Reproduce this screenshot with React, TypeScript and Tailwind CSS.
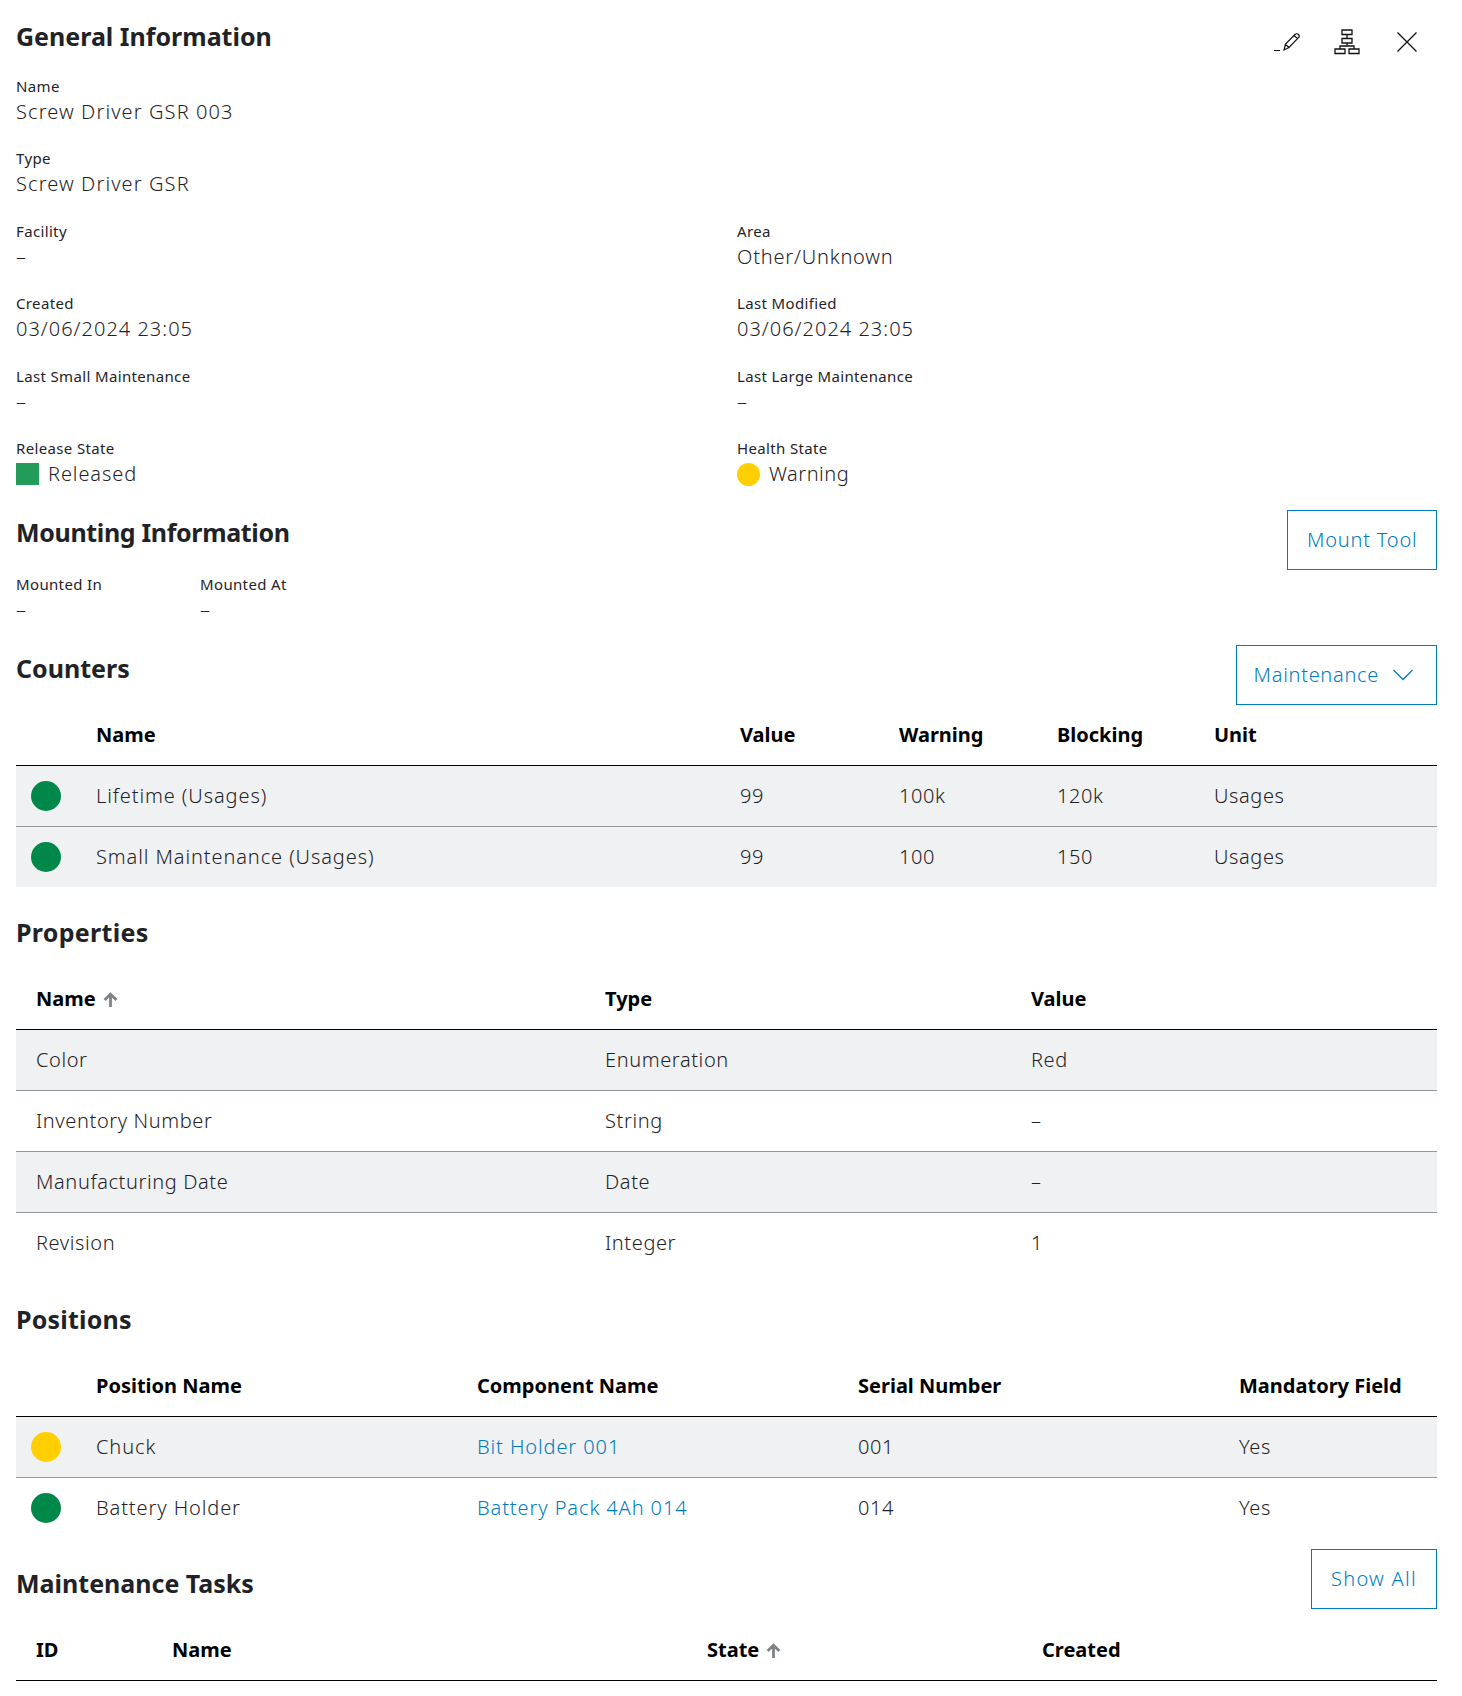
import React from 'react';

const FONT = "font-['Noto_Sans','Liberation_Sans',sans-serif]";

const Field: React.FC<{ label: string; value?: string; color?: 'square' | 'dot'; tracking?: string }> = ({
  label,
  value,
  color,
  tracking = 'tracking-[0.055em]',
}) => (
  <div className="h-[72.5px]">
    <div className="h-[19px] text-[15px] leading-[18px] tracking-[0.35px] text-[#1f2328]">{label}</div>
    <div className={`mt-[2px] flex h-7 items-center text-[20px] font-light leading-7 text-[#1f2328] ${tracking}`}>
      {color === 'square' && <span className="mr-[9px] h-[22px] w-[23px] bg-[#239b59]" />}
      {color === 'dot' && <span className="mr-[9px] h-[23px] w-[23px] rounded-full bg-[#ffcf00]" />}
      {value ?? '–'}
    </div>
  </div>
);

const Heading: React.FC<{ tracking?: string; children: React.ReactNode }> = ({ tracking = '', children }) => (
  <h2 className={`text-[25px] font-bold leading-[48px] text-[#1f2328] ${tracking}`}>{children}</h2>
);

const OutlineButton: React.FC<{ className?: string; children: React.ReactNode }> = ({
  className = 'px-[18.5px] tracking-[0.04em]',
  children,
}) => (
  <button className={`flex h-[60px] items-center border border-[#007bc0] text-[20px] font-light text-[#007bc0] ${className}`}>
    {children}
  </button>
);

const SortArrow = () => (
  <svg viewBox="0 0 14 14" className="ml-[7px] h-[15px] w-[15px]" fill="none" stroke="#7d8389" strokeWidth="2.6">
    <path d="M7 14V2M1.5 7.5L7 2l5.5 5.5" />
  </svg>
);

const StatusDot: React.FC<{ color: string }> = ({ color }) => (
  <span className={`ml-[15px] block h-[30px] w-[30px] rounded-full ${color}`} />
);

const Row: React.FC<{ template: string; shaded?: boolean; border?: boolean; children: React.ReactNode }> = ({
  template,
  shaded,
  border,
  children,
}) => (
  <div
    className={`grid items-center text-[20px] font-light tracking-[0.03em] text-[#1f2328] ${template} ${
      shaded ? 'bg-[#eff1f2]' : ''
    } ${border ? 'h-[61px] border-b border-[#8f979d]' : 'h-[60px]'}`}
  >
    {children}
  </div>
);

const Head: React.FC<{ template: string; children: React.ReactNode }> = ({ template, children }) => (
  <div className={`grid h-[61px] items-center border-b border-black text-[20px] font-bold text-black ${template}`}>
    {children}
  </div>
);

const Name: React.FC<{ children: React.ReactNode }> = ({ children }) => (
  <span className="tracking-[0.045em]">{children}</span>
);

const Link: React.FC<{ children: React.ReactNode }> = ({ children }) => (
  <span className="tracking-[0.045em] text-[#007bc0]">{children}</span>
);

const COUNTERS = 'grid-cols-[80px_644px_159px_158px_157px_1fr]';
const PROPS = 'grid-cols-[589px_426px_1fr]';
const POSITIONS = 'grid-cols-[80px_381px_381px_381px_1fr]';
const TASKS = 'grid-cols-[156px_535px_335px_1fr]';

export default function App() {
  return (
    <div className={`h-[1696px] w-[1462px] overflow-hidden bg-white pl-4 pr-[25px] pt-3 ${FONT}`}>
      <div className="flex h-[64.5px] items-start justify-between">
        <Heading>General Information</Heading>
        <div className="mr-[20px] mt-[17px] flex items-center">
          <svg viewBox="0 0 26 20" className="h-5 w-[26px]" fill="none" stroke="#111" strokeWidth="1.2">
            <path d="M0 18.5h6M10 18l1.5-6L21 2.5c1-1 2.6-1 3.5 0s.8 2.4 0 3.2L15 15.5zM11.5 12.5l3.5 3M20 3.5l3.5 3" />
          </svg>
          <svg viewBox="0 0 26 26" className="ml-[34px] h-[26px] w-[26px]" fill="none" stroke="#111" strokeWidth="1.3">
            <path d="M8 1h10v4.5H8zM8 9.5h10V14H8zM1 20h10v4.5H1zM15 20h10v4.5H15zM13 5.5v4M13 14v3M6 20v-3h14v3" />
          </svg>
          <svg viewBox="0 0 20 20" className="ml-[37px] h-5 w-5" fill="none" stroke="#111" strokeWidth="1.3">
            <path d="M0.5 0.5l19 19M19.5 0.5l-19 19" />
          </svg>
        </div>
      </div>

      <div className="grid grid-cols-[721px_1fr]">
        <div className="col-span-2"><Field label="Name" value="Screw Driver GSR 003" /></div>
        <div className="col-span-2"><Field label="Type" value="Screw Driver GSR" /></div>
        <Field label="Facility" />
        <Field label="Area" value="Other/Unknown" tracking="tracking-[0.04em]" />
        <Field label="Created" value="03/06/2024 23:05" tracking="tracking-[0.05em]" />
        <Field label="Last Modified" value="03/06/2024 23:05" tracking="tracking-[0.05em]" />
        <Field label="Last Small Maintenance" />
        <Field label="Last Large Maintenance" />
        <Field label="Release State" value="Released" color="square" tracking="tracking-[0.045em]" />
        <Field label="Health State" value="Warning" color="dot" tracking="tracking-[0.025em]" />
      </div>

      <div className="-mt-[1.5px] flex items-start justify-between">
        <div className="-mt-[2px]"><Heading tracking="tracking-[-0.35px]">Mounting Information</Heading></div>
        <OutlineButton>Mount Tool</OutlineButton>
      </div>
      <div className="mt-[5px] flex h-[70px]">
        <div className="w-[184px]"><Field label="Mounted In" /></div>
        <div className="w-[184px]"><Field label="Mounted At" /></div>
      </div>

      <div className="flex items-start justify-between">
        <div className="-mt-px"><Heading>Counters</Heading></div>
        <OutlineButton className="pl-[17px] pr-[23px] tracking-[0.035em]">
          Maintenance
          <svg viewBox="0 0 20 12" className="ml-[14px] h-3 w-5" fill="none" stroke="#007bc0" strokeWidth="1.3">
            <path d="M0.5 1l9.5 9.5L19.5 1" />
          </svg>
        </OutlineButton>
      </div>
      <Head template={COUNTERS}>
        <span /><span>Name</span><span>Value</span><span>Warning</span><span>Blocking</span><span>Unit</span>
      </Head>
      <Row template={COUNTERS} shaded border>
        <StatusDot color="bg-[#00884a]" /><Name>Lifetime (Usages)</Name><span>99</span><span>100k</span><span>120k</span><span>Usages</span>
      </Row>
      <Row template={COUNTERS} shaded>
        <StatusDot color="bg-[#00884a]" /><Name>Small Maintenance (Usages)</Name><span>99</span><span>100</span><span>150</span><span>Usages</span>
      </Row>

      <div className="mb-[13px] mt-[21px]"><Heading tracking="tracking-[0.3px]">Properties</Heading></div>
      <Head template={PROPS}>
        <span className="flex items-center pl-5">Name<SortArrow /></span><span>Type</span><span>Value</span>
      </Head>
      <Row template={PROPS} shaded border><span className="pl-5">Color</span><span>Enumeration</span><span>Red</span></Row>
      <Row template={PROPS} border><span className="pl-5">Inventory Number</span><span>String</span><span>–</span></Row>
      <Row template={PROPS} shaded border><span className="pl-5">Manufacturing Date</span><span>Date</span><span>–</span></Row>
      <Row template={PROPS}><span className="pl-5">Revision</span><span>Integer</span><span>1</span></Row>

      <div className="mb-[13px] mt-[22px]"><Heading tracking="tracking-[0.2px]">Positions</Heading></div>
      <Head template={POSITIONS}>
        <span /><span>Position Name</span><span>Component Name</span><span>Serial Number</span><span>Mandatory Field</span>
      </Head>
      <Row template={POSITIONS} shaded border>
        <StatusDot color="bg-[#ffcf00]" /><Name>Chuck</Name><Link>Bit Holder 001</Link><span>001</span><span>Yes</span>
      </Row>
      <Row template={POSITIONS}>
        <StatusDot color="bg-[#00884a]" /><Name>Battery Holder</Name><Link>Battery Pack 4Ah 014</Link><span>014</span><span>Yes</span>
      </Row>

      <div className="mt-[11px] flex items-start justify-between">
        <div className="mt-[10px]"><Heading>Maintenance Tasks</Heading></div>
        <OutlineButton className="px-[19px] tracking-[0.065em]">Show All</OutlineButton>
      </div>
      <div className="mt-[11px]">
        <Head template={TASKS}>
          <span className="pl-5">ID</span><span>Name</span><span className="flex items-center">State<SortArrow /></span><span>Created</span>
        </Head>
      </div>
    </div>
  );
}
